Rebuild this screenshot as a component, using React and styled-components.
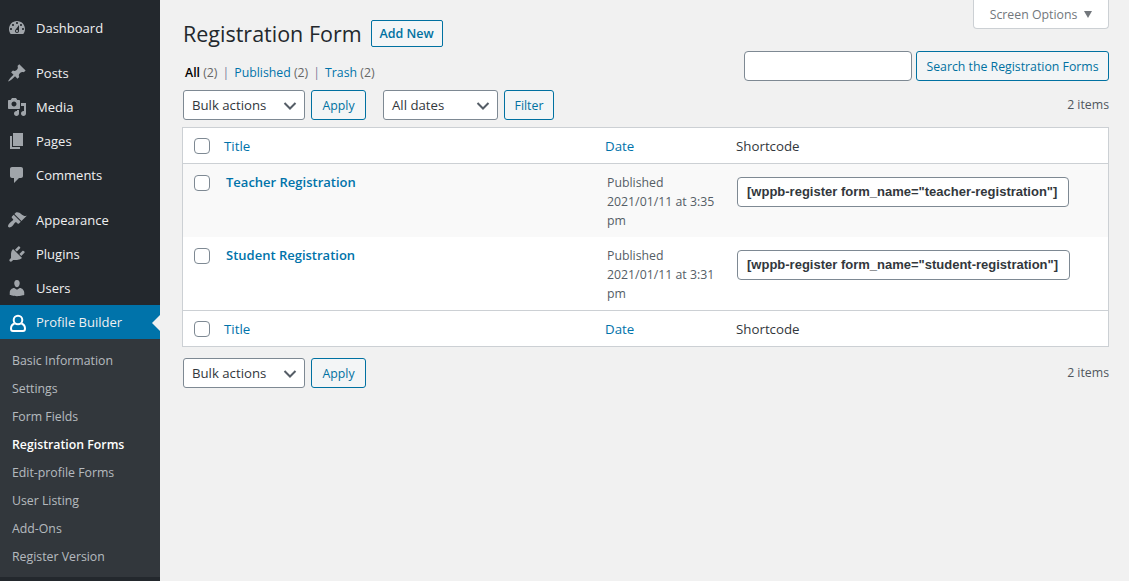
import React from "react";
import styled, { createGlobalStyle } from "styled-components";

const GlobalStyle = createGlobalStyle`
  html, body {
    margin: 0;
    padding: 0;
    height: 100%;
    background: #f1f1f1;
    overflow: hidden;
  }
  body {
    font-family: "Open Sans", sans-serif;
    font-size: 12.3px;
    color: #444;
  }
`;

const Page = styled.div`
  display: flex;
  width: 1129px;
  height: 581px;
  overflow: hidden;
`;

const Sidebar = styled.nav`
  flex: 0 0 160px;
  background: #23282d;
  padding-top: 11px;
`;

const MenuItem = styled.div`
  position: relative;
  display: flex;
  align-items: center;
  height: 34px;
  color: #f0f0f1;
  font-size: 13px;
  background: ${(p) => (p.$active ? "#0073aa" : "transparent")};
  margin-bottom: ${(p) => (p.$sep ? "11px" : "0")};
  svg {
    flex: 0 0 20px;
    margin-left: 7px;
    margin-right: 9px;
  }
`;

const Arrow = styled.span`
  position: absolute;
  right: 0;
  top: 10px;
  border: 8px solid transparent;
  border-left-width: 0;
  border-right-color: #f1f1f1;
`;

const SubMenu = styled.div`
  background: #32373c;
  padding: 7px 0;
`;

const SubItem = styled.div`
  height: 28px;
  line-height: 30px;
  padding-left: 12px;
  font-size: 12.3px;
  color: ${(p) => (p.$current ? "#fff" : "rgba(240, 245, 250, 0.7)")};
  font-weight: ${(p) => (p.$current ? 600 : 400)};
`;

const Main = styled.main`
  flex: 1;
  padding: 0 20px 0 22px;
`;

const Top = styled.div`
  display: flex;
  justify-content: space-between;
  height: 90px;
`;

const TitleArea = styled.div`
  padding: 20px 0 0 1px;
`;

const TitleRow = styled.div`
  display: flex;
  align-items: center;
  gap: 9px;
  height: 27px;
`;

const Heading = styled.h1`
  margin: 0;
  font-size: 21.5px;
  font-weight: 400;
  color: #23282d;
`;

const AddNew = styled.a`
  box-sizing: border-box;
  width: 72px;
  height: 27px;
  line-height: 25px;
  text-align: center;
  border: 1px solid #0071a1;
  border-radius: 2px;
  background: #f3f5f6;
  color: #0071a1;
  font-size: 12.5px;
  font-weight: 600;
`;

const Views = styled.div`
  display: flex;
  margin-top: 17px;
  padding-left: 2px;
  line-height: 18px;
  color: #666;
  font-size: 12.3px;
`;

const ViewLink = styled.span`
  color: ${(p) => (p.$current ? "#000" : "#0073aa")};
  font-weight: ${(p) => (p.$current ? 600 : 400)};
`;

const Divider = styled.span`
  margin: 0 5px;
  color: #7a7a9a;
`;

const RightArea = styled.div`
  display: flex;
  flex-direction: column;
  align-items: flex-end;
`;

const ScreenTab = styled.div`
  box-sizing: border-box;
  display: flex;
  align-items: center;
  justify-content: center;
  gap: 7px;
  width: 136px;
  height: 29px;
  background: #fff;
  border: 1px solid #ccd0d4;
  border-top: 0;
  border-radius: 0 0 4px 4px;
  color: #72777c;
  font-size: 12.3px;
`;

const Caret = styled.span`
  border: 4.5px solid transparent;
  border-bottom-width: 0;
  border-top: 7px solid #72777c;
`;

const SearchRow = styled.div`
  display: flex;
  gap: 4px;
  margin-top: 22px;
`;

const SearchInput = styled.input`
  box-sizing: border-box;
  width: 168px;
  height: 30px;
  border: 1px solid #7e8993;
  border-radius: 4px;
  background: #fff;
`;

const Button = styled.button`
  box-sizing: border-box;
  height: 30px;
  padding: 0;
  width: ${(p) => p.$w}px;
  border: 1px solid #0071a1;
  border-radius: 3px;
  background: #f3f5f6;
  color: #0071a1;
  font-family: inherit;
  font-size: 12.3px;
`;

const Toolbar = styled.div`
  display: flex;
  align-items: center;
  height: 30px;
  padding-left: 1px;
`;

const Select = styled.div`
  box-sizing: border-box;
  display: flex;
  align-items: center;
  justify-content: space-between;
  width: ${(p) => p.$w}px;
  height: 30px;
  padding: 0 6px 0 8px;
  margin-right: 6px;
  border: 1px solid #7e8993;
  border-radius: 3px;
  background: #fff;
  color: #32373c;
  font-size: 13.2px;
`;

const FilterGroup = styled.div`
  display: flex;
  margin-left: 17px;
`;

const Count = styled.div`
  margin-left: auto;
  padding-bottom: 2px;
  color: #50575e;
  font-size: 12.3px;
`;

const Table = styled.div`
  margin-top: 7px;
  border: 1px solid #ccd0d4;
  background: #fff;
`;

const Row = styled.div`
  display: grid;
  grid-template-columns: 422px 131px 1fr;
  background: ${(p) => (p.$alt ? "#f9f9f9" : "#fff")};
  border-top: ${(p) => (p.$top ? "1px solid #ccd0d4" : "0")};
  border-bottom: ${(p) => (p.$bottom ? "1px solid #ccd0d4" : "0")};
`;

const HeadCell = styled.div`
  display: flex;
  align-items: center;
  height: 35px;
  color: ${(p) => (p.$link ? "#0073aa" : "#32373c")};
  font-size: 13.3px;
`;

const Cell = styled.div`
  height: 73px;
  box-sizing: border-box;
  padding-top: ${(p) => p.$top}px;
`;

const TitleCell = styled(Cell)`
  display: flex;
  align-items: flex-start;
`;

const Check = styled.span`
  box-sizing: border-box;
  flex: 0 0 16px;
  width: 16px;
  height: 16px;
  margin-left: 11px;
  margin-right: ${(p) => p.$gap}px;
  border: 1px solid #7e8993;
  border-radius: 4px;
  background: #fff;
`;

const RowTitle = styled.a`
  color: #0073aa;
  font-size: 13px;
  font-weight: 600;
  line-height: 14px;
`;

const DateCell = styled(Cell)`
  padding-left: 2px;
  padding-right: 10px;
  line-height: 19px;
  font-size: 12.3px;
  color: #555d66;
`;

const ShortcodeBox = styled.div`
  box-sizing: border-box;
  width: ${(p) => p.$w}px;
  height: 30px;
  margin-left: 1px;
  padding-left: 9px;
  line-height: 28px;
  border: 1px solid #7e8993;
  border-radius: 4px;
  background: #fff;
  color: #32373c;
  font-family: "Liberation Sans", Arial, sans-serif;
  font-size: 13px;
  font-weight: 700;
  white-space: nowrap;
`;

const BottomToolbar = styled(Toolbar)`
  margin-top: 11px;
`;

const RowHeadLink = styled.span`
  color: #0073aa;
`;

const Icon = ({ d, fill = "#a0a5aa" }) => (
  <svg width="20" height="20" viewBox="0 0 20 20" fill={fill}>
    <path d={d} />
  </svg>
);

const Chevron = () => (
  <svg width="16" height="16" viewBox="0 0 16 16" fill="none" stroke="#555d66" strokeWidth="2">
    <path d="M2.5 6l5.5 5.5L13.5 6" />
  </svg>
);

const menu = [
  { label: "Dashboard", sep: true, d: "M3.76 16h12.48c1.1-1.37 1.76-3.11 1.76-5 0-4.42-3.58-8-8-8s-8 3.58-8 8c0 1.89.66 3.63 1.76 5zM10 4c.55 0 1 .45 1 1s-.45 1-1 1-1-.45-1-1 .45-1 1-1zM6 6c.55 0 1 .45 1 1s-.45 1-1 1-1-.45-1-1 .45-1 1-1zm8 0c.55 0 1 .45 1 1s-.45 1-1 1-1-.45-1-1 .45-1 1-1zm-5.37 5.55L12 7v6c0 1.1-.9 2-2 2s-2-.9-2-2c0-.57.24-1.08.63-1.45zM4 10c.55 0 1 .45 1 1s-.45 1-1 1-1-.45-1-1 .45-1 1-1zm12 0c.55 0 1 .45 1 1s-.45 1-1 1-1-.45-1-1 .45-1 1-1zm-5 3c0-.55-.45-1-1-1s-1 .45-1 1 .45 1 1 1 1-.45 1-1z" },
  { label: "Posts", d: "M10.44 3.02l1.82-1.82 6.36 6.35-1.83 1.82c-1.05-.68-2.48-.57-3.41.36l-.75.75c-.92.93-1.04 2.35-.35 3.41l-1.83 1.82-2.41-2.41-2.8 2.79c-.42.42-3.38 2.71-3.8 2.29s1.86-3.39 2.28-3.81l2.79-2.79L4.1 9.36l1.83-1.82c1.05.69 2.48.57 3.4-.36l.75-.75c.93-.92 1.05-2.35.36-3.41z" },
  { label: "Media", d: "M13 11V4c0-.55-.45-1-1-1h-1.67L9 1H5L3.67 3H2c-.55 0-1 .45-1 1v7c0 .55.45 1 1 1h10c.55 0 1-.45 1-1zM7 4.5c1.38 0 2.5 1.12 2.5 2.5S8.38 9.5 7 9.5 4.5 8.38 4.5 7 5.62 4.5 7 4.5zM14 6h5v10.5c0 1.38-1.12 2.5-2.5 2.5S14 17.88 14 16.5s1.12-2.5 2.5-2.5c.17 0 .34.02.5.05V9h-3V6zm-4 8.05V13h2v3.5c0 1.38-1.12 2.5-2.5 2.5S7 17.88 7 16.5 8.12 14 9.5 14c.17 0 .34.02.5.05z" },
  { label: "Pages", d: "M6 15V2h10v13H6zm-1 1h8v2H3V5h2v11z" },
  { label: "Comments", sep: true, d: "M5 2h9c1.1 0 2 .9 2 2v7c0 1.1-.9 2-2 2h-2l-5 5v-5H5c-1.1 0-2-.9-2-2V4c0-1.1.9-2 2-2z" },
  { label: "Appearance", d: "M14.48 11.06L7.41 3.99l1.5-1.5c.5-.56 2.3-.47 3.51.32 1.21.8 1.43 1.28 2.91 2.1 1.18.64 2.45 1.26 4.45.85zm-.71.71L6.7 4.7 4.93 6.47c-.39.39-.39 1.02 0 1.41l1.06 1.06c.39.39.39 1.03 0 1.42-.6.6-1.43 1.11-2.21 1.69-.35.26-.7.53-1.01.84C1.43 14.23.4 16.08 1.4 17.07c.99 1 2.84-.03 4.18-1.36.31-.31.58-.66.85-1.02.57-.78 1.08-1.61 1.69-2.21.39-.39 1.02-.39 1.41 0l1.06 1.06c.39.39 1.02.39 1.41 0z" },
  { label: "Plugins", d: "M13.11 4.36L9.87 7.6 8 5.73l3.24-3.24c.35-.34 1.05-.2 1.56.32.52.51.66 1.21.31 1.55zm-8 1.77l.91-1.12 9.01 9.01-1.19.84c-.71.71-2.63 1.16-3.82 1.16H6.14L4.9 17.26c-.59.59-1.54.59-2.12 0-.59-.58-.59-1.53 0-2.12l1.24-1.24v-3.88c0-1.13.4-3.19 1.09-3.89zm7.26 3.97l3.24-3.24c.34-.35 1.04-.21 1.55.31.52.51.66 1.21.31 1.55l-3.24 3.25z" },
  { label: "Users", d: "M10 9.25c-2.27 0-2.73-3.44-2.73-3.44C7 4.02 7.82 2 9.97 2c2.16 0 2.98 2.02 2.71 3.81 0 0-.41 3.44-2.68 3.44zm0 2.57L12.72 10c2.39 0 4.52 2.33 4.52 4.53v2.49s-3.65 1.13-7.24 1.13c-3.65 0-7.24-1.13-7.24-1.13v-2.49c0-2.25 1.94-4.48 4.47-4.48z" },
];

const subItems = ["Basic Information", "Settings", "Form Fields", "Registration Forms", "Edit-profile Forms", "User Listing", "Add-Ons", "Register Version"];

const forms = [
  { title: "Teacher Registration", time: "3:35", code: "teacher-registration", w: 332, alt: true },
  { title: "Student Registration", time: "3:31", code: "student-registration", w: 333 },
];

const HeadRow = (props) => (
  <Row {...props}>
    <HeadCell>
      <Check $gap={14} />
      <RowHeadLink>Title</RowHeadLink>
    </HeadCell>
    <HeadCell $link>Date</HeadCell>
    <HeadCell>Shortcode</HeadCell>
  </Row>
);

const Bulk = () => (
  <>
    <Select $w={122}>
      Bulk actions
      <Chevron />
    </Select>
    <Button $w={55}>Apply</Button>
  </>
);

export default function App() {
  return (
    <Page>
      <GlobalStyle />
      <Sidebar>
        {menu.map((m) => (
          <MenuItem key={m.label} $sep={m.sep}>
            <Icon d={m.d} />
            {m.label}
          </MenuItem>
        ))}
        <MenuItem $active>
          <svg width="20" height="20" viewBox="0 0 20 20" fill="none" stroke="#fff" strokeWidth="2">
            <circle cx="11" cy="8" r="4.3" />
            <path d="M7.5 11.5C5 12.5 4 15 4 16.5c0 1.5.7 2.5 2 2.5h10c1.3 0 2-1 2-2.5 0-1.5-1-4-3.5-5" />
          </svg>
          Profile Builder
          <Arrow />
        </MenuItem>
        <SubMenu>
          {subItems.map((s) => (
            <SubItem key={s} $current={s === "Registration Forms"}>{s}</SubItem>
          ))}
        </SubMenu>
      </Sidebar>
      <Main>
        <Top>
          <TitleArea>
            <TitleRow>
              <Heading>Registration Form</Heading>
              <AddNew>Add New</AddNew>
            </TitleRow>
            <Views>
              <ViewLink $current>All</ViewLink>&nbsp;(2)
              <Divider>|</Divider>
              <ViewLink>Published</ViewLink>&nbsp;(2)
              <Divider>|</Divider>
              <ViewLink>Trash</ViewLink>&nbsp;(2)
            </Views>
          </TitleArea>
          <RightArea>
            <ScreenTab>
              Screen Options
              <Caret />
            </ScreenTab>
            <SearchRow>
              <SearchInput />
              <Button $w={193}>Search the Registration Forms</Button>
            </SearchRow>
          </RightArea>
        </Top>
        <Toolbar>
          <Bulk />
          <FilterGroup>
            <Select $w={115}>
              All dates
              <Chevron />
            </Select>
            <Button $w={50}>Filter</Button>
          </FilterGroup>
          <Count>2 items</Count>
        </Toolbar>
        <Table>
          <HeadRow $bottom />
          {forms.map((f) => (
            <Row key={f.title} $alt={f.alt}>
              <TitleCell $top={11}>
                <Check $gap={16} />
                <RowTitle>{f.title}</RowTitle>
              </TitleCell>
              <DateCell $top={9}>
                Published
                <br />
                2021/01/11 at {f.time} pm
              </DateCell>
              <Cell $top={13}>
                <ShortcodeBox $w={f.w}>[wppb-register form_name="{f.code}"]</ShortcodeBox>
              </Cell>
            </Row>
          ))}
          <HeadRow $top />
        </Table>
        <BottomToolbar>
          <Bulk />
          <Count>2 items</Count>
        </BottomToolbar>
      </Main>
    </Page>
  );
}
